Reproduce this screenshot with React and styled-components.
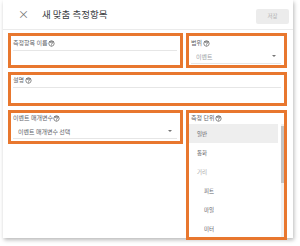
import React from "react";
import styled, { createGlobalStyle } from "styled-components";
import { MdHelpOutline } from "react-icons/md";

const GlobalStyle = createGlobalStyle`
  html, body {
    margin: 0;
    padding: 0;
    background: #ffffff;
  }
  body {
    font-family: "Noto Sans CJK KR", "Noto Sans", sans-serif;
    color: #5f6368;
  }
`;

const units = [
  { id: "general", name: "일반", selected: true },
  { id: "currency", name: "통화" },
  { id: "distance", name: "거리", group: true },
  { id: "feet", name: "피트", child: true },
  { id: "mile", name: "마일", child: true },
  { id: "meter", name: "미터", child: true },
];

export default function App() {
  return (
    <>
      <GlobalStyle />
      <S.Page>
        <S.Dialog>
          <S.Header>
            <S.Close>×</S.Close>
            <S.Title>새 맞춤 측정항목</S.Title>
            <S.SaveButton disabled>저장</S.SaveButton>
          </S.Header>
          <S.Body>
            <S.Mark $pad={3}>
              <S.Label>
                측정항목 이름 <Help />
              </S.Label>
              <S.Input />
            </S.Mark>
            <S.Mark $pad={3}>
              <S.Label>
                범위<Help />
              </S.Label>
              <S.Select $muted>
                <span>이벤트</span>
                <S.Arrow />
              </S.Select>
            </S.Mark>
            <S.Mark $wide $pad={1}>
              <S.Label>
                설명<Help />
              </S.Label>
              <S.Input />
            </S.Mark>
            <S.Mark $pad={1} $short>
              <S.Label>
                이벤트 매개변수 <Help />
              </S.Label>
              <S.Select>
                <span>이벤트 매개변수 선택</span>
                <S.Arrow />
              </S.Select>
            </S.Mark>
            <S.Mark $pad={1}>
              <S.Label>
                측정 단위<Help />
              </S.Label>
              <S.ListWrap>
                <S.List>
                  {units.map((u) => (
                    <S.Item
                      key={u.id}
                      $selected={u.selected}
                      $group={u.group}
                      $child={u.child}
                    >
                      {u.name}
                    </S.Item>
                  ))}
                </S.List>
                <S.Track>
                  <S.Thumb />
                </S.Track>
              </S.ListWrap>
            </S.Mark>
          </S.Body>
        </S.Dialog>
      </S.Page>
    </>
  );
}

const Help = () => <S.HelpIcon as={MdHelpOutline} />;

const S = {
  Page: styled.div`
    padding: 0 0 0 3px;
    width: 300px;
    height: 246px;
    box-sizing: border-box;
  `,
  Dialog: styled.div`
    width: 290px;
    height: 238px;
    background: #ffffff;
    box-shadow: 1px 2px 4px rgba(0, 0, 0, 0.28);
  `,
  Header: styled.div`
    height: 29px;
    display: flex;
    align-items: center;
    padding: 0 4px 0 15px;
    border-bottom: 1px solid #ebebeb;
  `,
  Close: styled.span`
    font-size: 11px;
    line-height: 1;
    color: #757575;
    width: 10px;
    margin-top: -1px;
  `,
  Title: styled.div`
    margin-left: 14px;
    font-size: 9.5px;
    color: #3c4043;
    margin-top: -1px;
  `,
  SaveButton: styled.button`
    margin-left: auto;
    width: 33px;
    height: 15px;
    border: none;
    border-radius: 2px;
    background: #ececec;
    color: #b0b0b0;
    font-family: inherit;
    font-size: 5.5px;
    padding: 0;
    margin-top: 3px;
  `,
  Body: styled.div`
    display: grid;
    grid-template-columns: 175px 101px;
    grid-template-rows: 35px 34px 130px;
    column-gap: 3px;
    row-gap: 4px;
    padding: 3px 6px 0 5px;
  `,
  Mark: styled.div`
    border: 3px solid #e8772e;
    box-sizing: border-box;
    display: flex;
    flex-direction: column;
    padding: ${(p) => p.$pad}px 3px 0 2px;
    grid-column: ${(p) => (p.$wide ? "1 / -1" : "auto")};
    align-self: ${(p) => (p.$short ? "start" : "stretch")};
    height: ${(p) => (p.$short ? "34px" : "auto")};
    min-height: 0;
  `,
  Label: styled.div`
    font-size: 6px;
    line-height: 8px;
    color: #5f6368;
    display: flex;
    align-items: center;
    white-space: nowrap;
  `,
  HelpIcon: styled.svg`
    width: 7px;
    height: 7px;
    color: #444;
    margin-left: 0.5px;
  `,
  Input: styled.div`
    height: 3px;
    border-bottom: 1px solid #e6e6e6;
  `,
  Select: styled.div`
    display: flex;
    align-items: center;
    justify-content: space-between;
    height: 14px;
    padding: 2px 5px 0 5px;
    font-size: 6px;
    color: ${(p) => (p.$muted ? "#a0a4a8" : "#5f6368")};
    border-bottom: 1px solid #e6e6e6;
  `,
  Arrow: styled.span`
    width: 0;
    height: 0;
    border-left: 2px solid transparent;
    border-right: 2px solid transparent;
    border-top: 2px solid #757575;
  `,
  ListWrap: styled.div`
    flex: 1;
    display: flex;
    margin: 2px -3px 0 -2px;
    overflow: hidden;
  `,
  List: styled.div`
    flex: 1;
    display: flex;
    flex-direction: column;
  `,
  Item: styled.div`
    flex: none;
    height: 19px;
    display: flex;
    align-items: center;
    padding-left: ${(p) => (p.$child ? 15 : 8)}px;
    font-size: 5.5px;
    color: ${(p) => (p.$group ? "#a8a8a8" : "#5f6368")};
    background: ${(p) => (p.$selected ? "#eeeeee" : "transparent")};
  `,
  Track: styled.div`
    width: 3px;
    margin-left: 3px;
    background: #f1f1f1;
  `,
  Thumb: styled.div`
    height: 57px;
    margin-top: 2px;
    background: #c4c4c4;
  `,
};
